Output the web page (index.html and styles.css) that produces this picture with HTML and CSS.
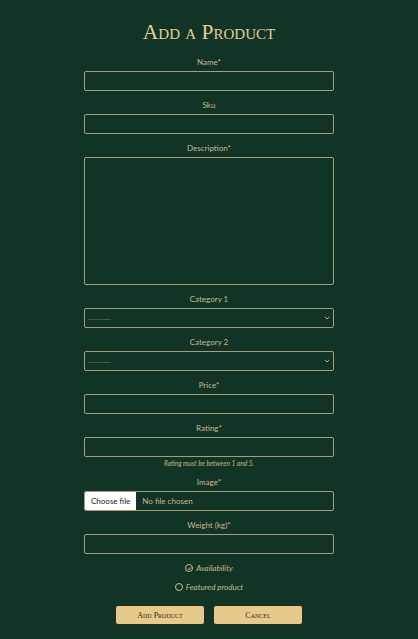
FILE: index.html
```html
<!DOCTYPE html>
<html lang="en">
<head>
<meta charset="utf-8">
<title>Add a Product</title>
<link rel="stylesheet" href="styles.css">
</head>
<body>
<main class="page">
  <h1 class="title">Add a Product</h1>
  <form class="form">
    <div class="field">
      <label class="label">Name*</label>
      <div class="input"></div>
    </div>
    <div class="field">
      <label class="label">Sku</label>
      <div class="input"></div>
    </div>
    <div class="field">
      <label class="label">Description*</label>
      <div class="input textarea"></div>
    </div>
    <div class="field">
      <label class="label">Category 1</label>
      <div class="input select">
        <span class="placeholder">---------</span>
        <svg class="chevron" width="6" height="4" viewBox="0 0 6 4"><path d="M0.8 0.8 L3 3 L5.2 0.8" fill="none" stroke="#b7ad86" stroke-width="1"/></svg>
      </div>
    </div>
    <div class="field">
      <label class="label">Category 2</label>
      <div class="input select">
        <span class="placeholder">---------</span>
        <svg class="chevron" width="6" height="4" viewBox="0 0 6 4"><path d="M0.8 0.8 L3 3 L5.2 0.8" fill="none" stroke="#b7ad86" stroke-width="1"/></svg>
      </div>
    </div>
    <div class="field">
      <label class="label">Price*</label>
      <div class="input"></div>
    </div>
    <div class="field">
      <label class="label">Rating*</label>
      <div class="input"></div>
      <p class="help">Rating must be between 1 and 5.</p>
    </div>
    <div class="field">
      <label class="label">Image*</label>
      <div class="input file">
        <span class="file-btn">Choose file</span>
        <span class="file-name">No file chosen</span>
      </div>
    </div>
    <div class="field">
      <label class="label">Weight (kg)*</label>
      <div class="input"></div>
    </div>
    <div class="check-row">
      <span class="check checked">
        <svg width="5" height="5" viewBox="0 0 5 5"><path d="M0.8 2.6 L2 3.8 L4.2 1.2" fill="none" stroke="#e2d6b0" stroke-width="0.9"/></svg>
      </span>
      <span class="check-label">Availability</span>
    </div>
    <div class="check-row">
      <span class="check"></span>
      <span class="check-label">Featured product</span>
    </div>
    <div class="actions">
      <button type="button" class="btn">Add Product</button>
      <button type="button" class="btn">Cancel</button>
    </div>
  </form>
</main>
</body>
</html>
```
FILE: styles.css
```css
html, body {
  margin: 0;
  padding: 0;
  background: #123427;
}
body {
  font-family: "Lato", "Liberation Sans", sans-serif;
  color: #c8b98b;
}
.page {
  width: 250px;
  margin: 0 auto;
  padding-top: 19px;
}
.title {
  margin: 0 0 11px;
  font-family: "Liberation Serif", serif;
  font-variant: small-caps;
  font-weight: normal;
  font-size: 21.5px;
  line-height: 26px;
  text-align: center;
  color: #e6cd92;
}
.form {
  display: flex;
  flex-direction: column;
}
.field {
  display: flex;
  flex-direction: column;
  gap: 3px;
  margin-bottom: 8px;
}
.label {
  padding-top: 1px;
  font-size: 8px;
  line-height: 11px;
  text-align: center;
  color: #c8b98b;
}
.input {
  box-sizing: border-box;
  height: 20px;
  border: 1px solid #a49f78;
  border-radius: 2px;
}
.textarea {
  height: 128px;
}
.select {
  display: flex;
  align-items: center;
  justify-content: space-between;
  padding: 0 3px 0 3px;
}
.placeholder {
  font-family: "Liberation Sans", sans-serif;
  font-size: 7px;
  color: #7f8770;
  letter-spacing: 0.2px;
}
.chevron {
  display: block;
}
.help {
  margin: -1px 0 0;
  font-size: 6.6px;
  line-height: 9px;
  font-style: italic;
  text-align: center;
  color: #c2b488;
}
.file {
  display: flex;
  align-items: stretch;
  overflow: hidden;
}
.file-btn {
  display: flex;
  align-items: center;
  padding: 0 6px;
  background: #ffffff;
  color: #222222;
  font-size: 8px;
  border-radius: 1px 0 0 1px;
}
.file-name {
  display: flex;
  align-items: center;
  padding-left: 6px;
  font-size: 8px;
  color: #c8b98b;
}
.check-row {
  display: flex;
  align-items: center;
  justify-content: center;
  gap: 3px;
  height: 12px;
  margin-bottom: 8px;
}
.check-row + .check-row {
  margin-top: -1px;
}
.check {
  box-sizing: border-box;
  width: 8px;
  height: 8px;
  border: 1px solid #c8b98b;
  border-radius: 50%;
  display: flex;
  align-items: center;
  justify-content: center;
}
.check svg {
  display: block;
}
.check-label {
  font-size: 8px;
  font-style: italic;
  color: #c8b98b;
}
.actions {
  display: flex;
  justify-content: center;
  gap: 8px;
  margin-top: 4px;
}
.btn {
  box-sizing: border-box;
  width: 90px;
  height: 20px;
  padding: 0;
  background: #e8c98c;
  border: 1px solid #2d2a1c;
  border-radius: 3px;
  font-family: "Liberation Serif", serif;
  font-variant: small-caps;
  font-size: 8px;
  color: #3a2c1c;
}
```
